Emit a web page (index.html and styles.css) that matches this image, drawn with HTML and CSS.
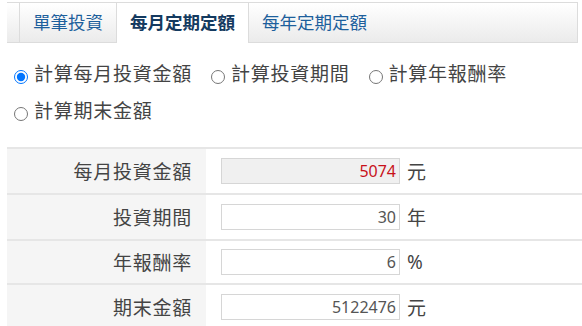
FILE: index.html
```html
<!doctype html>
<html lang="zh-TW">
  <head>
    <meta charset="UTF-8" />
    <meta name="viewport" content="width=device-width, initial-scale=1.0" />
    <title>定期定額試算</title>
    <link rel="stylesheet" href="styles.css">
  </head>
  <body>
    <div class="tabs">
      <a class="tab" href="#">單筆投資</a>
      <a class="tab active" href="#">每月定期定額</a>
      <a class="tab" href="#">每年定期定額</a>
    </div>

    <div class="options">
      <label class="option"><input type="radio" name="calc" checked />計算每月投資金額</label>
      <label class="option"><input type="radio" name="calc" />計算投資期間</label>
      <label class="option"><input type="radio" name="calc" />計算年報酬率</label>
      <label class="option"><input type="radio" name="calc" />計算期末金額</label>
    </div>

    <div class="form">
      <div class="row">
        <div class="label">每月投資金額</div>
        <div class="value">
          <input type="text" class="result" value="5074" disabled />
          <span class="unit">元</span>
        </div>
      </div>
      <div class="row">
        <div class="label">投資期間</div>
        <div class="value">
          <input type="text" value="30" />
          <span class="unit">年</span>
        </div>
      </div>
      <div class="row">
        <div class="label">年報酬率</div>
        <div class="value">
          <input type="text" value="6" />
          <span class="unit">%</span>
        </div>
      </div>
      <div class="row">
        <div class="label">期末金額</div>
        <div class="value">
          <input type="text" value="5122476" />
          <span class="unit">元</span>
        </div>
      </div>
    </div>
  </body>
</html>
```

FILE: styles.css
```css
body {
  margin: 0;
  padding: 0;
  font-family: 'Noto Sans', 'Noto Sans CJK TC', sans-serif;
  color: #333;
  background: #fff;
}

.tabs {
  display: flex;
  height: 39px;
  margin: 2px 4px 0 7px;
  padding-left: 12px;
  border: 1px solid #dcdcdc;
  border-left: none;
  background: linear-gradient(#ffffff, #ebebeb);
}

.tab {
  padding: 0 13px;
  border-left: 1px solid #dcdcdc;
  font-size: 17.5px;
  line-height: 39px;
  color: #1d5f9c;
  text-decoration: none;
}

.tab.active {
  height: 40px;
  background: #fff;
  font-weight: bold;
  color: #143a60;
  border-right: 1px solid #dcdcdc;
}

.tab.active + .tab {
  border-left: none;
}

.options {
  display: flex;
  flex-wrap: wrap;
  margin-top: 11px;
  padding-left: 14px;
}

.option {
  display: inline-flex;
  align-items: center;
  height: 37px;
  margin-right: 19px;
  font-size: 19px;
  letter-spacing: 0.75px;
  color: #444;
}

.option input {
  width: 14px;
  height: 14px;
  margin: 9px 6px 0 0;
}

.form {
  margin: 19px 0 0 7px;
}

.row {
  display: flex;
  border-top: 2px solid #e6e6e6;
}

.label {
  width: 185px;
  padding-right: 14px;
  display: flex;
  align-items: center;
  justify-content: flex-end;
  background: #f5f5f5;
  font-size: 19px;
  letter-spacing: 0.75px;
  color: #444;
}

.value {
  display: flex;
  align-items: center;
  padding: 8px 0 8px 15px;
}

.value input {
  box-sizing: border-box;
  width: 179px;
  height: 26px;
  padding: 0 3px 0 0;
  border: 1px solid #d6d6d6;
  background: #fff;
  font-family: 'Noto Sans', sans-serif;
  font-size: 16px;
  text-align: right;
  color: #555;
}

.value input.result {
  background: #f0f0f0;
  color: #c8101a;
}

.unit {
  margin-left: 7px;
  font-size: 19px;
  color: #444;
}
```
